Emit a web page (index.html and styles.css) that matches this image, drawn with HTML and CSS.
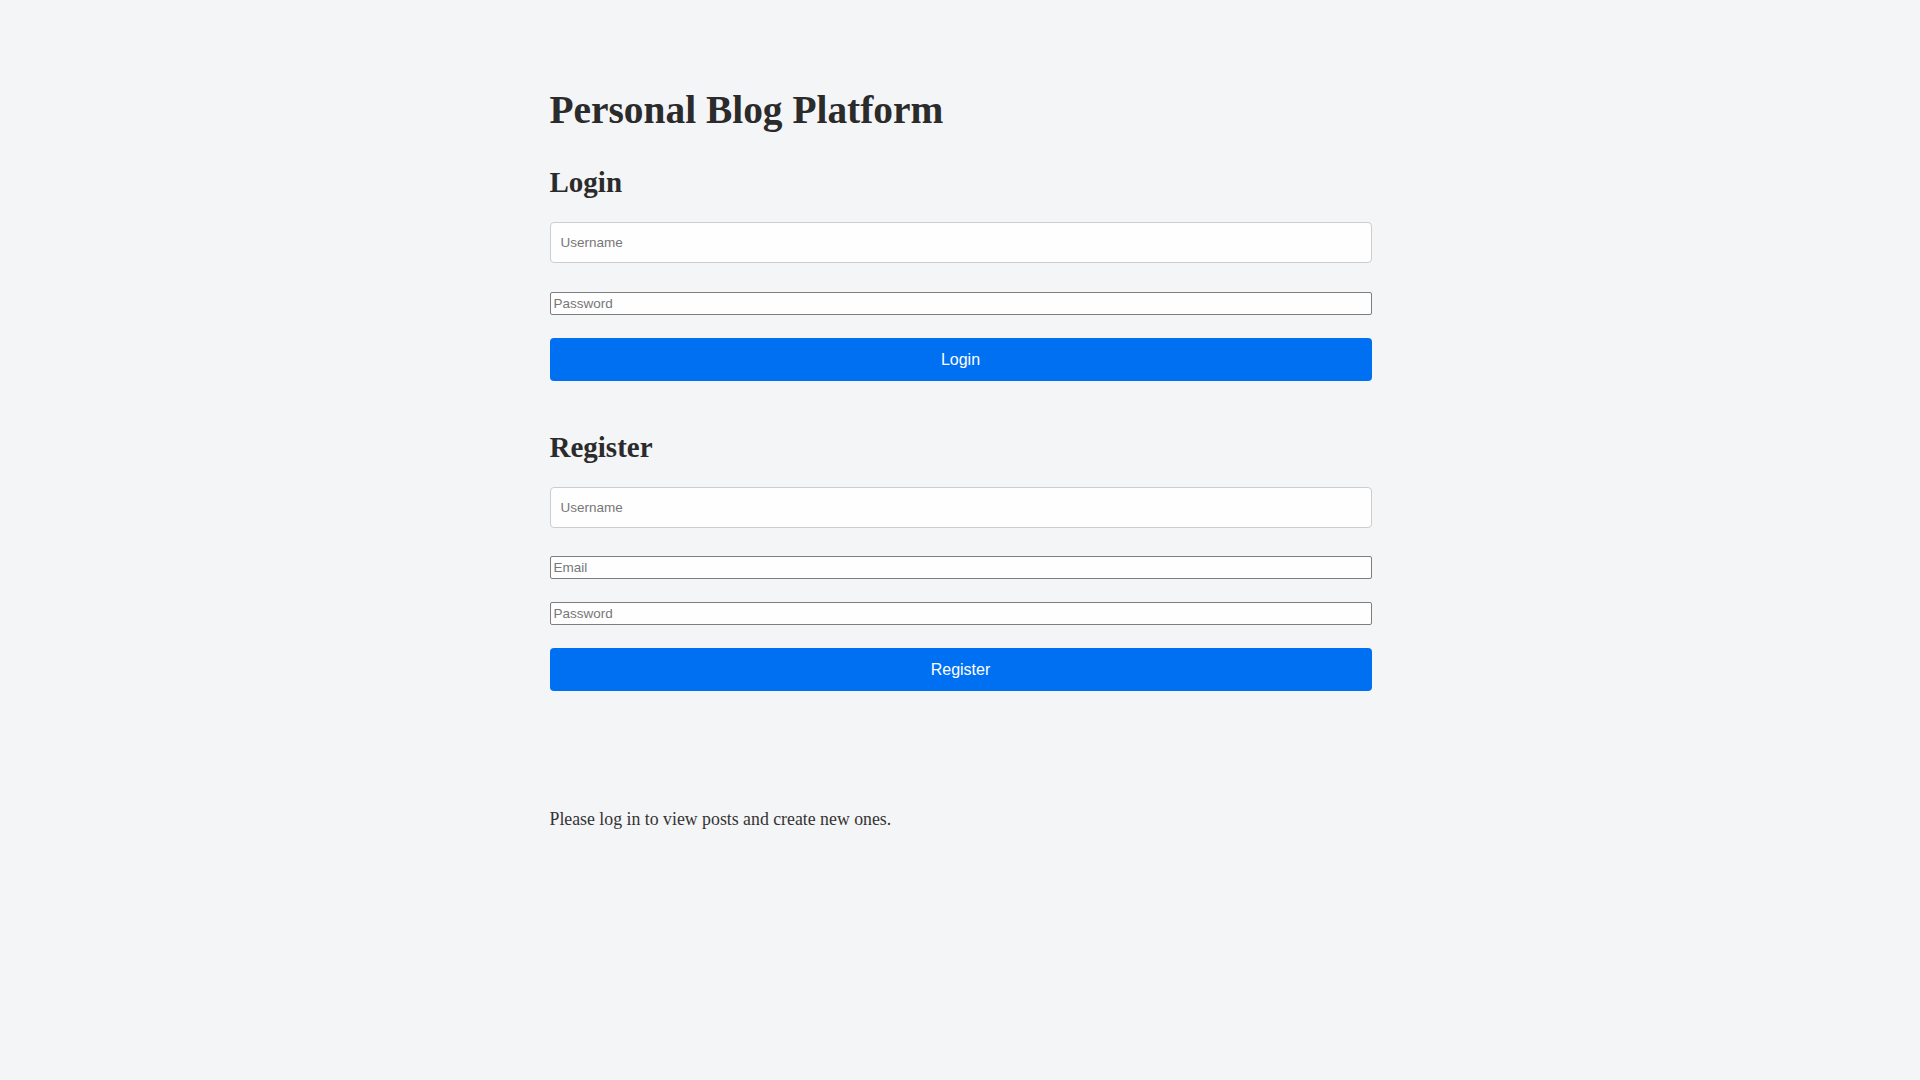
FILE: index.html
```html
<!DOCTYPE html>
<html lang="en">
<head>
<meta charset="utf-8">
<title>Personal Blog Platform</title>
<link rel="stylesheet" href="styles.css">
</head>
<body>
<main class="container">
  <h1 class="title">Personal Blog Platform</h1>

  <section class="auth login">
    <h2 class="section-title">Login</h2>
    <input class="field field-styled" type="text" placeholder="Username">
    <input class="field field-plain" type="password" placeholder="Password">
    <button class="btn" type="button">Login</button>
  </section>

  <section class="auth register">
    <h2 class="section-title">Register</h2>
    <input class="field field-styled" type="text" placeholder="Username">
    <input class="field field-plain" type="email" placeholder="Email">
    <input class="field field-plain" type="password" placeholder="Password">
    <button class="btn" type="button">Register</button>
  </section>

  <p class="notice">Please log in to view posts and create new ones.</p>
</main>
</body>
</html>
```
FILE: styles.css
```css
html, body {
  margin: 0;
  padding: 0;
}

body {
  background: #f4f5f7;
  color: #2e2e2e;
  font-family: "Liberation Serif", "Times New Roman", serif;
  min-height: 1080px;
}

.container {
  width: 822px;
  margin: 0 auto;
  padding: 87px 0 0 1px;
  display: flex;
  flex-direction: column;
}

.title {
  margin: 0;
  font-size: 39.4px;
  line-height: 46px;
  font-weight: 700;
  color: #2b2b2b;
}

.auth {
  display: flex;
  flex-direction: column;
}

.login {
  margin-top: 32px;
}

.register {
  margin-top: 49px;
}

.section-title {
  margin: 0 0 23px;
  font-size: 29px;
  line-height: 34px;
  font-weight: 700;
  color: #2b2b2b;
}

.field {
  box-sizing: border-box;
  width: 100%;
  margin: 0;
  font-family: "Liberation Sans", Arial, sans-serif;
  font-size: 13.5px;
  color: #333;
  background: #fefefe;
  outline: none;
}

.field::placeholder {
  color: #777;
}

.field-styled {
  height: 41px;
  padding: 0 10px;
  border: 1px solid #cdcdcd;
  border-radius: 4px;
  margin-bottom: 29px;
}

.field-plain {
  height: 23px;
  padding: 0 3px;
  border: 1px solid #7e7e7e;
  border-radius: 2px;
  margin-bottom: 23px;
}

.register .field-styled {
  margin-bottom: 28px;
}

.btn {
  box-sizing: border-box;
  width: 100%;
  height: 43px;
  margin: 0;
  border: none;
  border-radius: 4px;
  background: #0070f3;
  color: #ffffff;
  font-family: "Liberation Sans", Arial, sans-serif;
  font-size: 16px;
  cursor: pointer;
}

.notice {
  margin: 117px 0 0;
  font-size: 17.8px;
  line-height: 22px;
  color: #333;
}
```
